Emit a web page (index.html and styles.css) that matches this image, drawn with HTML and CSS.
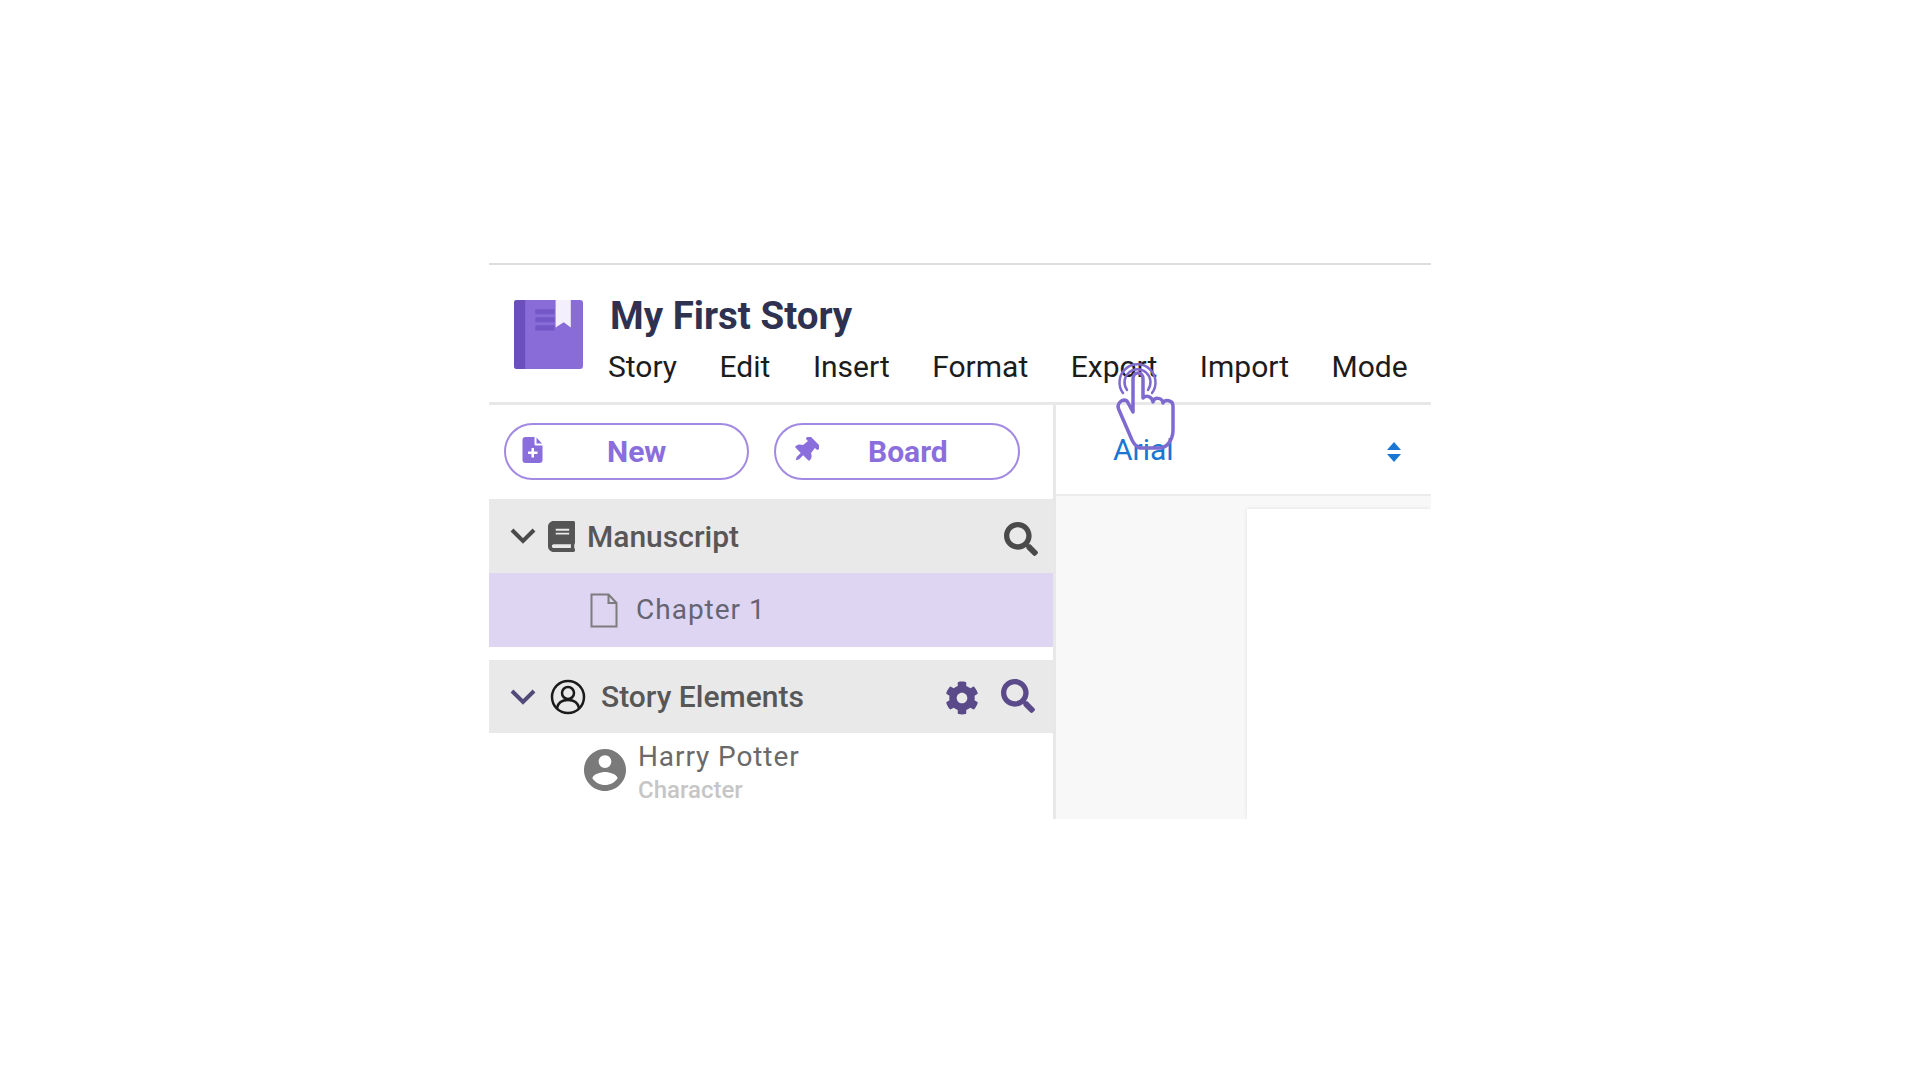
FILE: index.html
```html
<!DOCTYPE html>
<html lang="en">
<head>
  <meta charset="UTF-8">
  <meta name="viewport" content="width=device-width, initial-scale=1.0">
  <title>My First Story</title>
  <link rel="stylesheet" href="styles.css">
</head>
<body>

<div class="app">
  <header class="app-header">
    <svg class="logo" viewBox="0 0 68 68">
      <rect width="68" height="68" rx="3" fill="#8a6cd9"/>
      <path d="M3 0h8v68H3a3 3 0 0 1-3-3V3a3 3 0 0 1 3-3z" fill="#6b4fbb"/>
      <path d="M21 9h19v5H21zM21 17h19v5H21zM21 25h19v5H21z" fill="#7357c6"/>
      <path d="M41 0h15v27l-7-5-8 5z" fill="#f3effc"/>
    </svg>
    <div class="header-text">
      <h1 class="story-title">My First Story</h1>
      <nav class="menu">
        <span class="menu-item">Story</span>
        <span class="menu-item">Edit</span>
        <span class="menu-item">Insert</span>
        <span class="menu-item">Format</span>
        <span class="menu-item">Export</span>
        <span class="menu-item">Import</span>
        <span class="menu-item">Mode</span>
      </nav>
    </div>
  </header>

  <div class="app-body">
    <aside class="sidebar">
      <div class="sidebar-actions">
        <button class="pill-btn pill-btn-new">
          <svg class="pill-icon" viewBox="0 0 20 26"><path fill-rule="evenodd" d="M3 0h9v7a1.500 1.500 0 0 0 1.500 1.500H20V23a3 3 0 0 1-3 3H3a3 3 0 0 1-3-3V3a3 3 0 0 1 3-3zM14 0.500l5.500 6H14zM9 11v3.500H5.500v2.500H9v3.500h2.500V17H15v-2.500h-3.500V11z"/></svg>
          <span>New</span>
        </button>
        <button class="pill-btn pill-btn-board">
          <svg class="pill-icon pin-icon" viewBox="0 0 384 512"><path transform="rotate(45 192 256)" d="M298.028 214.267L285.793 96H328c13.255 0 24-10.745 24-24V24c0-13.255-10.745-24-24-24H56C42.745 0 32 10.745 32 24v48c0 13.255 10.745 24 24 24h42.207L85.972 214.267C37.465 236.82 0 277.261 0 328c0 13.255 10.745 24 24 24h136v104.007c0 1.242.289 2.467.845 3.578l24 48c2.941 5.882 11.364 5.893 14.311 0l24-48a8.008 8.008 0 0 0 .845-3.578V352h136c13.255 0 24-10.745 24-24-.001-51.183-37.983-91.420-85.973-113.733z"/></svg>
          <span>Board</span>
        </button>
      </div>

      <div class="section-head">
        <svg class="chevron" viewBox="0 0 28 18"><path d="M3 3l11 11L25 3"/></svg>
        <svg class="book-icon" viewBox="0 0 448 512"><path d="M448 360V24c0-13.300-10.700-24-24-24H96C43 0 0 43 0 96v320c0 53 43 96 96 96h328c13.300 0 24-10.700 24-24v-16c0-7.500-3.500-14.300-8.900-18.700-4.200-15.400-4.200-59.300 0-74.700 5.400-4.300 8.900-11.100 8.900-18.600zM128 134c0-3.300 2.700-6 6-6h212c3.300 0 6 2.700 6 6v20c0 3.300-2.700 6-6 6H134c-3.300 0-6-2.700-6-6v-20zm0 64c0-3.300 2.700-6 6-6h212c3.300 0 6 2.700 6 6v20c0 3.300-2.700 6-6 6H134c-3.300 0-6-2.700-6-6v-20zm253.400 250H96c-17.700 0-32-14.300-32-32 0-17.600 14.400-32 32-32h285.400c-1.900 17.100-1.900 46.900 0 64z"/></svg>
        <span class="section-title">Manuscript</span>
        <svg class="search-icon search-dark" viewBox="0 0 512 512"><path d="M505 442.700L405.300 343c-4.500-4.500-10.600-7-17-7H372c27.600-35.300 44-79.700 44-128C416 93.100 322.900 0 208 0S0 93.100 0 208s93.100 208 208 208c48.300 0 92.700-16.400 128-44v16.300c0 6.400 2.500 12.500 7 17l99.700 99.700c9.400 9.400 24.600 9.400 33.900 0l28.300-28.300c9.400-9.400 9.400-24.600.1-34zM208 336c-70.700 0-128-57.200-128-128 0-70.700 57.200-128 128-128 70.700 0 128 57.200 128 128 0 70.700-57.200 128-128 128z"/></svg>
      </div>
      <div class="chapter-row">
        <svg class="file-icon" viewBox="0 0 28 35"><path d="M1.500 1.500h17l8 8.500v23.500h-25z M18.500 1.500v8.500h8"/></svg>
        <span class="chapter-name">Chapter 1</span>
      </div>

      <div class="section-head section-head-elements">
        <svg class="chevron chevron-purple" viewBox="0 0 28 18"><path d="M3 3l11 11L25 3"/></svg>
        <svg class="elements-icon" viewBox="0 0 36 36">
          <circle cx="18" cy="18" r="16"/>
          <circle cx="18" cy="14" r="6"/>
          <path d="M7 29c1-5 5-8 11-8s10 3 11 8"/>
        </svg>
        <span class="section-title">Story Elements</span>
        <svg class="cog-icon" viewBox="0 0 512 512"><path d="M487.400 315.700l-42.600-24.600c4.300-23.200 4.300-47 0-70.200l42.600-24.600c4.900-2.800 7.100-8.600 5.500-14-11.100-35.600-30-67.800-54.700-94.600-3.800-4.100-10-5.100-14.800-2.300L380.800 110c-17.900-15.400-38.500-27.300-60.800-35.100V25.800c0-5.600-3.900-10.500-9.400-11.700-36.700-8.200-74.300-7.800-109.200 0-5.500 1.200-9.400 6.100-9.400 11.700V75c-22.200 7.900-42.800 19.800-60.800 35.100L88.700 85.500c-4.900-2.800-11-1.900-14.800 2.300-24.700 26.700-43.600 58.900-54.700 94.600-1.700 5.400.6 11.200 5.500 14L67.300 221c-4.300 23.200-4.300 47 0 70.200l-42.600 24.600c-4.900 2.800-7.100 8.600-5.500 14 11.100 35.600 30 67.800 54.700 94.600 3.800 4.100 10 5.100 14.800 2.300l42.600-24.600c17.900 15.400 38.500 27.300 60.800 35.100v49.200c0 5.600 3.900 10.500 9.400 11.700 36.700 8.200 74.300 7.800 109.200 0 5.500-1.200 9.400-6.100 9.400-11.700v-49.200c22.200-7.900 42.800-19.800 60.800-35.100l42.600 24.600c4.900 2.800 11 1.900 14.800-2.300 24.700-26.700 43.600-58.900 54.700-94.600 1.500-5.500-.7-11.300-5.600-14.100zM256 336c-44.100 0-80-35.900-80-80s35.900-80 80-80 80 35.900 80 80-35.900 80-80 80z"/></svg>
        <svg class="search-icon search-purple" viewBox="0 0 512 512"><path d="M505 442.700L405.300 343c-4.500-4.500-10.600-7-17-7H372c27.600-35.300 44-79.700 44-128C416 93.100 322.900 0 208 0S0 93.100 0 208s93.100 208 208 208c48.300 0 92.700-16.400 128-44v16.300c0 6.400 2.500 12.500 7 17l99.700 99.700c9.400 9.400 24.600 9.400 33.900 0l28.300-28.300c9.400-9.400 9.400-24.600.1-34zM208 336c-70.700 0-128-57.200-128-128 0-70.700 57.200-128 128-128 70.700 0 128 57.200 128 128 0 70.700-57.200 128-128 128z"/></svg>
      </div>
      <div class="element-row">
        <svg class="avatar" viewBox="2 2 20 20"><path d="M12 2C6.480 2 2 6.480 2 12s4.480 10 10 10 10-4.480 10-10S17.520 2 12 2zm0 3c1.660 0 3 1.340 3 3s-1.340 3-3 3-3-1.340-3-3 1.340-3 3-3zm0 14.200c-2.500 0-4.710-1.280-6-3.220.03-1.990 4-3.080 6-3.080 1.990 0 5.970 1.090 6 3.080-1.290 1.940-3.500 3.220-6 3.220z"/></svg>
        <div class="element-text">
          <span class="element-name">Harry Potter</span>
          <span class="element-type">Character</span>
        </div>
      </div>
    </aside>

    <main class="editor">
      <div class="font-bar">
        <span class="font-name">Arial</span>
        <svg class="font-arrows" viewBox="0 0 14 20"><path d="M7 0l7 8H0zM0 12h14l-7 8z"/></svg>
      </div>
      <div class="page-area">
        <div class="page"></div>
      </div>
    </main>
  </div>

  <svg class="hand" viewBox="0 0 100 110">
    <path d="M43 62V29c0-8 10-8 10 0v19c3-3 9-2 10 4 1-5 9-5 10 1 2-4 10-3 10 3v24c0 10-6 17-12 18H50c-3-1-6-4-8-8L29 60c-3-6 3-12 8-9z"/>
    <path class="hand-ring" d="M37 40A13 13 0 1 1 58 40"/>
    <path class="hand-ring" d="M33 43A18 18 0 1 1 62 43"/>
  </svg>
</div>

</body>
</html>
```
FILE: styles.css
```css
body {
  margin: 0;
  background: #fff;
  font-family: Roboto, "Liberation Sans", sans-serif;
}

.app {
  position: relative;
  width: 942px;
  height: 554px;
  margin: 263px 0 0 489px;
  border-top: 2px solid #dedede;
  display: flex;
  flex-direction: column;
}

.app-header {
  height: 140px;
  box-sizing: border-box;
  border-bottom: 3px solid #e8e8e8;
  display: flex;
  padding: 35px 0 0 25px;
  flex-shrink: 0;
}

.logo {
  width: 69px;
  height: 69px;
  margin-right: 26px;
  flex-shrink: 0;
}

.header-text {
  display: flex;
  flex-direction: column;
}

.story-title {
  margin: -6px 0 0 1px;
  font-size: 38.5px;
  line-height: 44px;
  font-weight: 700;
  color: #2f3150;
}

.menu {
  display: flex;
  gap: 42.500px;
  margin-left: -1px;
  margin-top: 9px;
}

.menu-item {
  font-size: 30px;
  line-height: 40px;
  color: #1c1c1c;
}

.app-body {
  flex: 1;
  display: flex;
  min-height: 0;
}

.sidebar {
  width: 567px;
  box-sizing: border-box;
  border-right: 3px solid #e8e8e8;
  flex-shrink: 0;
  overflow: hidden;
}

.sidebar-actions {
  height: 94px;
  box-sizing: border-box;
  padding: 18px 0 0 15px;
  display: flex;
  gap: 25px;
}

.pill-btn {
  width: 245px;
  height: 57px;
  box-sizing: border-box;
  border: 2px solid #a28ae2;
  border-radius: 29px;
  background: #fff;
  display: flex;
  align-items: center;
  padding: 0 0 0 16px;
  font: 700 30px Roboto, sans-serif;
  color: #8a6fdc;
}

.pill-btn-board {
  width: 246px;
}

.pill-icon {
  width: 21px;
  height: 26px;
  fill: #8a6fdc;
  margin-top: -4px;
  flex-shrink: 0;
}

.pin-icon {
  width: 27px;
  height: 27px;
  margin-left: 0;
  margin-top: -3px;
}

.pill-btn-new span {
  margin-left: 64px;
}

.pill-btn-board span {
  margin-left: 49px;
}

.section-head {
  height: 74px;
  background: #e9e9e9;
  display: flex;
  align-items: center;
  padding-left: 20px;
}

.section-head-elements {
  margin-top: 13px;
  height: 73px;
}

.chevron {
  width: 28px;
  height: 18px;
  fill: none;
  stroke: #4a4a4a;
  stroke-width: 4px;
  flex-shrink: 0;
}

.chevron-purple {
  stroke: #524a78;
}

.book-icon {
  width: 27px;
  height: 31px;
  fill: #555;
  margin-left: 11px;
  flex-shrink: 0;
}

.section-title {
  font-size: 30px;
  font-weight: 500;
  color: #575757;
  margin-left: 12px;
}

.search-icon {
  width: 34px;
  height: 34px;
  flex-shrink: 0;
  margin-left: auto;
}

.search-dark {
  fill: #4a4a4a;
  margin-right: 15px;
  margin-top: 6px;
}

.search-purple {
  fill: #5b4a8a;
  margin-left: 22px;
  margin-right: 18px;
  margin-top: -1px;
}

.elements-icon {
  width: 36px;
  height: 36px;
  fill: none;
  stroke: #1a1a1a;
  stroke-width: 2.500px;
  margin-left: 13px;
  flex-shrink: 0;
}

.section-head-elements .section-title {
  margin-left: 15px;
}

.cog-icon {
  width: 34px;
  height: 34px;
  fill: #5b4a8a;
  margin-left: auto;
  margin-top: 3px;
  flex-shrink: 0;
}

.chapter-row {
  height: 74px;
  background: #ded5f2;
  display: flex;
  align-items: center;
  padding-left: 101px;
}

.file-icon {
  width: 28px;
  height: 35px;
  fill: none;
  stroke: #7c7c7c;
  stroke-width: 2px;
  flex-shrink: 0;
}

.chapter-name {
  font-size: 28px;
  letter-spacing: 1px;
  color: #646472;
  margin-left: 18px;
  margin-top: -2px;
}

.element-row {
  display: flex;
  align-items: center;
  padding-left: 95px;
  height: 72px;
}

.avatar {
  width: 42px;
  height: 42px;
  fill: #7a7a7a;
  flex-shrink: 0;
  margin-top: 2px;
}

.element-text {
  display: flex;
  flex-direction: column;
  margin-left: 12px;
  margin-top: 8px;
}

.element-name {
  font-size: 28px;
  line-height: 33px;
  letter-spacing: 0.9px;
  color: #6a6a6a;
}

.element-type {
  font-size: 24px;
  line-height: 34px;
  font-weight: 500;
  color: #c6c6c6;
}

.editor {
  flex: 1;
  display: flex;
  flex-direction: column;
  min-width: 0;
}

.font-bar {
  height: 91px;
  box-sizing: border-box;
  border-bottom: 2px solid #ececec;
  display: flex;
  align-items: center;
  justify-content: space-between;
  padding: 0 30px 0 57px;
  flex-shrink: 0;
}

.font-name {
  font-size: 30px;
  color: #1976d2;
}

.font-arrows {
  width: 14px;
  height: 20px;
  fill: #1976d2;
  margin-top: 5px;
}

.page-area {
  flex: 1;
  background: #f8f8f8;
  padding: 13px 0 0 191px;
  display: flex;
  min-height: 0;
  overflow: hidden;
}

.page {
  flex: 1;
  background: #fff;
  box-shadow: 0 0 4px rgba(0, 0, 0, 0.1);
}

/* pointer hand lying over the menu */
.hand {
  position: absolute;
  left: 601px;
  top: 85px;
  width: 100px;
  height: 110px;
  fill: none;
  stroke: #7f6bd0;
  stroke-width: 3.500px;
  stroke-linecap: round;
  stroke-linejoin: round;
}

.hand-ring {
  stroke-width: 2.500px;
}
```
